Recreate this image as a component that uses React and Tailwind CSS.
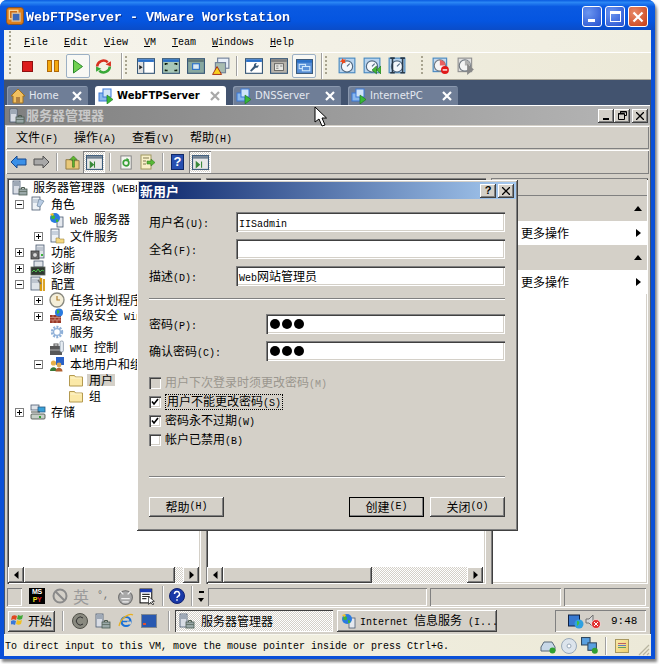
import React from "react";

const RAISED = "bg-[#d4d0c8] shadow-[inset_-1px_-1px_0_#404040,inset_1px_1px_0_#fff,inset_-2px_-2px_0_#808080]";
const SUNKEN = "bg-white shadow-[inset_1px_1px_0_#808080,inset_2px_2px_0_#404040,inset_-1px_-1px_0_#fff,inset_-2px_-2px_0_#d4d0c8]";
const ETCHED = "bg-[#d4d0c8] shadow-[inset_1px_1px_0_#808080,inset_-1px_-1px_0_#fff]";
const BAR = "bg-[#d4d0c8] shadow-[inset_1px_1px_0_#fff,inset_-1px_-1px_0_#808080]";
const DITHER = "bg-[repeating-conic-gradient(#fff_0_25%,#d4d0c8_0_50%)] bg-[length:2px_2px]";

// SimSun has half width latin, so ascii runs get a smaller mono font
function Zh({ children }) {
  return children.split(/([\x00-\x7f]+)/).map((p, i) =>
    /^[\x00-\x7f]+$/.test(p) ? (
      <span key={i} className="font-['Liberation_Mono',monospace] text-[10px] whitespace-pre">{p}</span>
    ) : (
      p
    )
  );
}

function Svg({ size = 16, children, className = "" }) {
  return (
    <svg width={size} height={size} viewBox="0 0 16 16" className={"shrink-0 " + className}>
      {children}
    </svg>
  );
}

/* ---------- icons ---------- */
const Server = ({ size }) => (
  <Svg size={size}>
    <rect x="1" y="1" width="7" height="13" fill="#d8dce4" stroke="#4a5a70" strokeWidth="0.8" />
    <path d="M2 3h5M2 5h5" stroke="#4a5a70" strokeWidth="0.8" />
    <rect x="7" y="9" width="8" height="6" fill="#9aa8a8" stroke="#4a5a50" strokeWidth="0.8" />
    <path d="M9.5 9V7.5h3V9" fill="none" stroke="#4a5a50" />
    <path d="M7 11.5h8" stroke="#5a6a60" strokeWidth="0.8" />
  </Svg>
);
const Doc = ({ children }) => (
  <Svg>
    <rect x="2" y="1" width="8" height="13" fill="#eef2f6" stroke="#4a5a70" strokeWidth="0.8" />
    <path d="M3 4h6M3 6h6" stroke="#8aa0b8" strokeWidth="0.8" />
    {children}
  </Svg>
);
const Folder = () => (
  <Svg>
    <path d="M1.5 3.5h5l1 1.5h7v9h-13z" fill="#fbe9a8" stroke="#b49a50" strokeWidth="1" />
    <path d="M2.5 6h11" stroke="#fff6d0" />
  </Svg>
);
const Globe = () => (
  <Svg>
    <rect x="8" y="5" width="6" height="10" fill="#e4e8ee" stroke="#4a5a70" strokeWidth="0.8" />
    <circle cx="6" cy="6" r="5" fill="#2a7ae0" />
    <path d="M3 3c2 0 4 1 3 3S3 7 2 6zM7 7c2 0 3 1 2 3l-2 0z" fill="#3cb43c" />
    <path d="M1 2l3-1 1 2-2 1z" fill="#f0c030" />
  </Svg>
);
const Gear = ({ c = "#8fb0d8" }) => (
  <Svg>
    <circle cx="8" cy="8" r="5" fill="none" stroke={c} strokeWidth="2.4" strokeDasharray="2 1.2" />
    <circle cx="8" cy="8" r="3.4" fill="none" stroke={c} strokeWidth="1.3" />
  </Svg>
);
const Clock = () => (
  <Svg>
    <circle cx="8" cy="8" r="7" fill="#f4eed8" stroke="#8a8a80" strokeWidth="1.4" />
    <path d="M8 4v4h3" fill="none" stroke="#b08030" strokeWidth="1.2" />
  </Svg>
);
const Wall = () => (
  <Svg>
    <rect x="1" y="7" width="11" height="8" fill="#9a3a28" />
    <path d="M1 9.5h11M1 12h11M4 7v2.5M8 7v2.5M6 9.5V12M10 9.5V12M4 12v3M8 12v3" stroke="#e0b0a0" strokeWidth="0.6" />
    <circle cx="10" cy="4.5" r="4" fill="#2a7ae0" />
    <path d="M8 2c2 0 3 1 2 3l-2 1z" fill="#3cb43c" />
  </Svg>
);
const Tools = () => (
  <Svg>
    <rect x="1" y="1" width="9" height="13" fill="#dfe3e8" stroke="#4a5a70" strokeWidth="0.8" />
    <path d="M2 4h7M2 6h7" stroke="#8a98a8" strokeWidth="0.8" />
    <path d="M11 2v13" stroke="#d89a10" strokeWidth="2.4" />
    <path d="M14 3v12" stroke="#d89a10" strokeWidth="1.8" />
    <path d="M8 4l3 4" stroke="#707070" strokeWidth="1.4" />
  </Svg>
);
const Features = () => (
  <Svg>
    <rect x="6" y="1" width="8" height="13" fill="#dfe3e8" stroke="#4a5a70" strokeWidth="0.8" />
    <path d="M7 4h6M7 6h6" stroke="#8a98a8" strokeWidth="0.8" />
    <rect x="1" y="7" width="8" height="8" fill="#707070" stroke="#303030" strokeWidth="0.8" />
    <circle cx="5" cy="11" r="2.4" fill="#d8d8d8" stroke="#303030" strokeWidth="0.6" />
    <rect x="11" y="10" width="2" height="2" fill="#3cb43c" />
  </Svg>
);
const Diag = () => (
  <Svg>
    <rect x="4" y="1" width="9" height="6" fill="#dfe3e8" stroke="#4a5a70" strokeWidth="0.8" />
    <rect x="1" y="7" width="14" height="8" fill="#303830" stroke="#606860" strokeWidth="0.8" />
    <path d="M2 12l2-2 2 2 2-3 2 3 2-2 2 1" fill="none" stroke="#50d050" strokeWidth="0.9" />
  </Svg>
);
const Wmi = () => (
  <Svg>
    <rect x="1" y="6" width="12" height="9" fill="#585858" />
    <path d="M1 10h12" stroke="#b0b0b0" />
    <rect x="5" y="4" width="4" height="2" fill="none" stroke="#585858" />
    <rect x="11" y="1" width="3.4" height="11" rx="1.4" fill="#e8eef4" stroke="#7a8a9a" strokeWidth="0.7" />
  </Svg>
);
const Users = () => (
  <Svg>
    <rect x="7" y="1" width="8" height="8" fill="#2a62c8" />
    <circle cx="4.5" cy="7" r="2.6" fill="#e8b048" />
    <path d="M1 15c0-5 7-5 7 0z" fill="#3a7a38" />
    <circle cx="10" cy="9" r="2.4" fill="#d8a858" />
    <path d="M6.5 15.5c0-5 7-5 7 0z" fill="#b06030" />
  </Svg>
);
const Storage = () => (
  <Svg>
    <rect x="1" y="1" width="8" height="5" fill="#dfe3e8" stroke="#4a5a70" strokeWidth="0.8" />
    <rect x="8" y="3" width="7" height="5" fill="#3aa0d8" stroke="#2a5a80" strokeWidth="0.8" />
    <rect x="1" y="10" width="14" height="5" rx="1" fill="#c8d0c8" stroke="#404840" strokeWidth="0.8" />
    <path d="M1 8h9" stroke="#404840" />
    <rect x="9" y="12" width="2" height="2" fill="#30a030" />
  </Svg>
);
const VmTab = ({ size = 16, c = "#3a78d8" }) => (
  <Svg size={size}>
    <rect x="1" y="5" width="8" height="8" fill="#8ab8ec" stroke={c} />
    <rect x="5" y="1" width="8" height="8" fill="#d0e4f8" stroke={c} />
    <path d="M9 7l6 4.5L9 16z" fill="#38b838" stroke="#1a7a1a" strokeWidth="0.6" />
  </Svg>
);
const WinBox = ({ children, size = 18, fill = "#fff", head = "#2a70c8" }) => (
  <Svg size={size}>
    <rect x="0.5" y="1.5" width="15" height="13" fill={fill} stroke="#385878" />
    <rect x="1" y="2" width="14" height="2.4" fill={head} />
    {children}
  </Svg>
);
const Dial = ({ children }) => (
  <Svg size={18}>
    <rect x="1" y="1" width="14" height="13" fill="#b8d4ee" stroke="#4888c0" />
    <circle cx="8" cy="8.4" r="5" fill="#f4f8fc" stroke="#506880" strokeWidth="1" />
    <path d="M8 8.4l2.4-2.6" stroke="#506880" />
    {children}
  </Svg>
);
const Pie = ({ children, gray }) => (
  <Svg size={18}>
    <rect x="1" y="1" width="12" height="12" fill={gray ? "#e0e0e0" : "#c4d8ee"} stroke={gray ? "#909090" : "#4888c0"} />
    <circle cx="7" cy="7.6" r="5" fill="#f4f4f4" stroke="#707880" />
    <path d="M7 7.6V2.6A5 5 0 0 1 12 7.6z" fill={gray ? "#b0b0b0" : "#e86060"} />
    {children}
  </Svg>
);
const Grip = () => (
  <div className="w-[2px] h-[20px] shrink-0 bg-[repeating-linear-gradient(to_bottom,#a8a490_0_2px,transparent_2px_4px)]" />
);
const VSep = ({ className = "" }) => <div className={"w-[2px] shrink-0 bg-[linear-gradient(to_right,#a0a0a0_50%,#fff_50%)] " + className} />;
const Ico = ({ children, className = "" }) => <div className={"w-[18px] flex justify-center shrink-0 " + className}>{children}</div>;

/* ---------- vmware chrome ---------- */
function TitleBar() {
  return (
    <div className="h-[30px] shrink-0 flex items-center pl-[6px] pr-[7px] rounded-t-[7px] bg-[linear-gradient(to_bottom,#0a5be0_0,#2a86f4_8%,#0a5ae2_22%,#0555e0_70%,#0a4cc8_100%)]">
      <Svg size={18} className="mt-[2px]">
        <rect x="0.5" y="0.5" width="15" height="15" rx="2.5" fill="#e0801c" stroke="#8a4a10" strokeWidth="0.7" />
        <rect x="3" y="3" width="7.500" height="7.500" fill="#c86810" stroke="#f8d8a0" strokeWidth="1.200" />
        <rect x="5.500" y="5.500" width="7" height="7" fill="#3a68b8" stroke="#d8c0a0" strokeWidth="1.200" />
      </Svg>
      <span className="ml-[2px] pt-[5px] font-['Liberation_Mono',monospace] font-bold text-[13.33px] text-white whitespace-pre drop-shadow-[1px_1px_0_#0a3090]">
        WebFTPServer - VMware Workstation
      </span>
      <div className="ml-auto flex gap-[3px] mt-[3px]">
        <div className="w-[20px] h-[21px] rounded-[3px] border border-white bg-[radial-gradient(circle_at_30%_30%,#6c96f0,#2450d0)] flex items-end pl-[5px] pb-[4px]">
          <div className="w-[7px] h-[3px] bg-white" />
        </div>
        <div className="w-[20px] h-[21px] rounded-[3px] border border-white bg-[radial-gradient(circle_at_30%_30%,#6c96f0,#2450d0)] flex items-center justify-center">
          <div className="w-[11px] h-[11px] border border-white border-t-[3px]" />
        </div>
        <div className="w-[20px] h-[21px] rounded-[3px] border border-white bg-[radial-gradient(circle_at_30%_30%,#e88a68,#c83c14)] flex items-center justify-center">
          <svg width="12" height="12" viewBox="0 0 12 12"><path d="M1.5 1.5l9 9M10.5 1.5l-9 9" stroke="#fff" strokeWidth="2.2" /></svg>
        </div>
      </div>
    </div>
  );
}

function MenuBar() {
  const items = [["F", "ile", "w-[40px]"], ["E", "dit", "w-[40px]"], ["V", "iew", "w-[40px]"], ["V", "M", "w-[28px]"], ["T", "eam", "w-[40px]"], ["W", "indows", "w-[58px]"], ["H", "elp", "w-[40px]"]];
  return (
    <div className="h-[22px] shrink-0 flex items-center pl-[5px] bg-[linear-gradient(to_right,#f6f4ec,#f0eee0)] font-['Liberation_Mono',monospace] text-[10px] text-black">
      <Grip />
      <div className="flex ml-[13px] pt-[3px]">
        {items.map(([a, b, w]) => (
          <span key={a + b} className={w}>
            <span className="underline">{a}</span>
            {b}
          </span>
        ))}
      </div>
    </div>
  );
}

function Toolbar() {
  const box = "w-[24px] h-[24px] rounded-[2px] border border-[#9cb0c4] bg-[#f8f8f4] flex items-center justify-center shrink-0";
  return (
    <div className="h-[28px] shrink-0 flex items-center pl-[5px] border-t border-t-white border-b border-b-[#aca899] bg-[linear-gradient(to_right,#f4f2e8,#ece9d8)]">
      <Grip />
      <div className="w-[11px] h-[11px] ml-[11px] bg-[#dc1c1c] border border-[#901010]" />
      <div className="flex gap-[2px] ml-[14px]">
        <div className="w-[5px] h-[12px] bg-[#f4a80c] border border-[#b06808]" />
        <div className="w-[5px] h-[12px] bg-[#f4a80c] border border-[#b06808]" />
      </div>
      <div className={box + " ml-[7px]"}>
        <svg width="12" height="15" viewBox="0 0 12 15"><path d="M1.5 1l9 6.5-9 6.5z" fill="#70d050" stroke="#2a8a2a" /></svg>
      </div>
      <Ico className="ml-[4px]">
        <Svg size={17}>
          <path d="M2 8a6 6 0 0 1 10-4" fill="none" stroke="#d83020" strokeWidth="2.4" />
          <path d="M14 8a6 6 0 0 1-10 4" fill="none" stroke="#38a838" strokeWidth="2.4" />
          <path d="M10 6l5-3v5z" fill="#d83020" />
          <path d="M6 10l-5 3V8z" fill="#38a838" />
        </Svg>
      </Ico>
      <VSep className="h-[26px] ml-[9px]" />
      <div className="ml-[2px]"><Grip /></div>
      <div className="flex gap-[7px] ml-[10px]">
        <Ico><WinBox><rect x="1" y="4.5" width="5" height="9.5" fill="#e0e0e0" /><path d="M6 4.5v10" stroke="#385878" /><path d="M2 7l3 2-3 2z" fill="#202020" /></WinBox></Ico>
        <Ico><WinBox fill="#a8c8b8"><path d="M3 7V6h2M13 7V6h-2M3 11v1h2M13 11v1h-2" fill="none" stroke="#102010" strokeWidth="1.2" /></WinBox></Ico>
        <Ico><WinBox fill="#88a8a0" head="#607878"><rect x="5" y="6" width="6" height="5" fill="#d8e8f4" stroke="#2a70c8" /></WinBox></Ico>
        <Ico>
          <Svg size={18}>
            <rect x="5" y="1" width="10" height="9" fill="#e8eff8" stroke="#708098" />
            <rect x="3" y="5" width="9" height="9" fill="#a8bcb0" stroke="#708098" />
            <path d="M4.5 8.5l4 7h-8z" fill="#f8d020" stroke="#a02010" strokeWidth="0.8" />
          </Svg>
        </Ico>
      </div>
      <VSep className="h-[20px] ml-[6px]" />
      <div className="flex gap-[7px] ml-[7px] items-center">
        <Ico><WinBox><path d="M10.500 5.500a2 2 0 0 0-2.500 2.500L4.500 12l1 1 4-3.500a2 2 0 0 0 2.500-2.500l-1.500 1-1-1z" fill="#385878" /></WinBox></Ico>
        <Ico><WinBox fill="#b8b4ac" head="#808080"><rect x="4" y="6" width="8" height="6" fill="#e8e8e4" stroke="#505050" strokeWidth="0.7" /><path d="M5.500 8h2M5.500 10h2M9 8h2" stroke="#606060" strokeWidth="0.7" /></WinBox></Ico>
        <div className={box + " -ml-[3px]"}>
          <WinBox size={17} fill="#5890d8"><rect x="3" y="6" width="6" height="4" fill="none" stroke="#d0e8fc" /><rect x="6" y="8" width="7" height="4" fill="#5890d8" stroke="#d0e8fc" /></WinBox>
        </div>
      </div>
      <VSep className="h-[26px] ml-[5px]" />
      <div className="ml-[2px]"><Grip /></div>
      <div className="flex gap-[7px] ml-[11px]">
        <Ico><Dial><path d="M4 1l1 1.500 2-.5-1 2 1 1.500-2-.5-1 1.500-.5-2-2-.5 1.500-1z" fill="#f04818" /></Dial></Ico>
        <Ico><Dial><path d="M16 8v7l-4-3.500zM12 8v7l-4-3.500z" fill="#48b838" stroke="#186818" strokeWidth="0.5" /></Dial></Ico>
        <Ico><Dial><path d="M2 1h4M4 1v13M2 14h4M11 1h4M13 1v13M11 14h4" fill="none" stroke="#283848" strokeWidth="1.4" /></Dial></Ico>
      </div>
      <div className="ml-[15px] flex items-center">
        <Grip />
      </div>
      <div className="flex gap-[7px] ml-[9px]">
        <Ico><Pie><circle cx="11.500" cy="11.500" r="3.500" fill="#e01818" /><path d="M9.500 11.500h4" stroke="#fff" strokeWidth="1.200" /></Pie></Ico>
        <Ico><Pie gray><path d="M9 6l6 5-6 5z" fill="#888" /></Pie></Ico>
      </div>
    </div>
  );
}

function Tab({ icon, label, w, active }) {
  return (
    <div className={"h-[19px] flex items-center rounded-t-[3px] pl-[3px] pr-[6px] " + w + " " + (active ? "bg-white" : "bg-[#6f7e97] shadow-[inset_1px_1px_0_#8a98ae]")}>
      {icon}
      <span className={"ml-[3px] font-['DejaVu_Sans',sans-serif] whitespace-nowrap " + (active ? "font-bold text-[10px] text-black" : "text-[10px] text-[#e4e8f0]")}>{label}</span>
      <svg width="10" height="10" viewBox="0 0 10 10" className="ml-auto"><path d="M1 1l8 8M9 1L1 9" stroke={active ? "#a8a8a8" : "#fff"} strokeWidth="2.200" /></svg>
    </div>
  );
}

function Tabs() {
  return (
    <div className="h-[25px] shrink-0 flex items-end gap-[7px] pl-[3px] bg-[#42536f]">
      <Tab w="w-[81px]" label="Home" icon={<Svg size={16}><path d="M8 1L1 8h2v7h10V8h2z" fill="#f0c060" stroke="#a07020" /><rect x="6" y="9" width="4" height="6" fill="#b08040" /></Svg>} />
      <Tab w="w-[131px]" active label="WebFTPServer" icon={<VmTab />} />
      <Tab w="w-[108px]" label="DNSServer" icon={<VmTab />} />
      <Tab w="w-[110px]" label="InternetPC" icon={<VmTab />} />
    </div>
  );
}

function VmStatus() {
  return (
    <div className="h-[22px] shrink-0 flex items-center pl-[1px] pr-[1px] bg-[linear-gradient(to_right,#f4f2e4,#ece9d8)] border-t border-t-[#f8f8f0]">
      <span className="pt-[2px] font-['Liberation_Mono',monospace] text-[10px] text-black whitespace-pre">To direct input to this VM, move the mouse pointer inside or press Ctrl+G.</span>
      <div className="ml-auto flex items-center">
        <Svg>
          <path d="M1 9l3-5h8l3 5v4H1z" fill="#c8d8e8" stroke="#586878" />
          <circle cx="12.500" cy="12.500" r="3" fill="#30a030" />
        </Svg>
        <Svg size={16} className="ml-[5px]">
          <circle cx="8" cy="8" r="7.500" fill="#dce4ec" stroke="#98a8b8" />
          <circle cx="8" cy="8" r="2" fill="#fff" stroke="#98a8b8" />
        </Svg>
        <Svg size={17} className="ml-[4px]">
          <rect x="0.500" y="0.500" width="8" height="7" fill="#5aa0e0" stroke="#304860" />
          <rect x="6.500" y="5.500" width="8" height="7" fill="#5aa0e0" stroke="#304860" />
          <circle cx="13" cy="13" r="2.800" fill="#30a030" />
        </Svg>
        <VSep className="h-[18px] ml-[7px]" />
        <div className="w-[14px] h-[14px] ml-[8px] border border-[#a89860] bg-[linear-gradient(135deg,#f8e8a8,#f0d070)] flex flex-col justify-center gap-[1px] px-[2px]">
          <div className="h-[1px] bg-[#c06060]" /><div className="h-[1px] bg-[#6080c0]" /><div className="h-[1px] bg-[#60a060]" />
        </div>
        <svg width="12" height="12" viewBox="0 0 12 12" className="ml-[9px] mt-[8px]"><path d="M11 1L1 11M11 5l-6 6M11 9l-2 2" stroke="#b8b4a0" strokeWidth="1.200" /></svg>
      </div>
    </div>
  );
}

/* ---------- guest: server manager ---------- */
const TREE = [
  { lv: 0, icon: <Server />, label: "服务器管理器 (WEBFTPSERVER)" },
  { lv: 1, exp: "-", icon: <Doc><path d="M9 3l5 2-4 6-3-1z" fill="#b8cce4" stroke="#607890" strokeWidth="0.6" /></Doc>, label: "角色" },
  { lv: 2, icon: <Globe />, label: "Web 服务器 (IIS)" },
  { lv: 2, exp: "+", icon: <Doc><path d="M7 10h3l1 1h4v4H7z" fill="#f4d880" stroke="#a08840" strokeWidth="0.6" /></Doc>, label: "文件服务" },
  { lv: 1, exp: "+", icon: <Features />, label: "功能" },
  { lv: 1, exp: "+", icon: <Diag />, label: "诊断" },
  { lv: 1, exp: "-", icon: <Tools />, label: "配置" },
  { lv: 2, exp: "+", icon: <Clock />, label: "任务计划程序" },
  { lv: 2, exp: "+", icon: <Wall />, label: "高级安全 Windows 防火墙" },
  { lv: 2, icon: <Gear />, label: "服务" },
  { lv: 2, icon: <Wmi />, label: "WMI 控制" },
  { lv: 2, exp: "-", icon: <Users />, label: "本地用户和组" },
  { lv: 3, icon: <Folder />, label: "用户", selected: true },
  { lv: 3, icon: <Folder />, label: "组" },
  { lv: 1, exp: "+", icon: <Storage />, label: "存储" },
];
const INDENT = { 0: "pl-[4px]", 1: "pl-[7px]", 2: "pl-[26px]", 3: "pl-[60px]" };

function Expander({ sign }) {
  return (
    <div className="w-[15px] shrink-0">
      {sign && (
        <div className="w-[9px] h-[9px] border border-[#808080] bg-white relative">
          <div className="absolute left-[1px] right-[1px] top-[3px] h-[1px] bg-black" />
          {sign === "+" && <div className="absolute top-[1px] bottom-[1px] left-[3px] w-[1px] bg-black" />}
        </div>
      )}
    </div>
  );
}

function Tree() {
  return (
    <div className="flex-1 pt-[1px] overflow-hidden">
      {TREE.map((r, i) => (
        <div key={i} className={"h-[16px] flex items-center whitespace-nowrap " + INDENT[r.lv]}>
          {r.lv > 0 && r.lv < 3 && <Expander sign={r.exp} />}
          {r.icon}
          <span className={r.selected ? "ml-[3px] px-[2px] bg-[#d4d0c8]" : "ml-[5px]"}>
            <Zh>{r.label}</Zh>
          </span>
        </div>
      ))}
    </div>
  );
}

const Arrow = ({ dir }) => (
  <svg width="5" height="8" viewBox="0 0 5 8"><path d={dir === "l" ? "M4.500 0v8L0 4z" : "M.5 0v8L5 4z"} fill="#000" /></svg>
);

function HScroll({ thumb, track }) {
  return (
    <div className="h-[16px] shrink-0 flex">
      <div className={"w-[16px] flex items-center justify-center " + RAISED}><Arrow dir="l" /></div>
      <div className={"h-full " + thumb + " " + RAISED} />
      <div className={"h-full " + track + " " + DITHER} />
      <div className={"w-[16px] flex items-center justify-center " + RAISED}><Arrow dir="r" /></div>
    </div>
  );
}

function ActionHead() {
  return (
    <div className="h-[25px] flex items-center justify-end pr-[5px] bg-[#d4d0c8]">
      <svg width="8" height="5" viewBox="0 0 8 5"><path d="M0 5h8L4 0z" fill="#000" /></svg>
    </div>
  );
}
function ActionItem() {
  return (
    <div className="h-[24px] flex items-center pl-[29px] pr-[6px] bg-white whitespace-nowrap">
      更多操作
      <svg width="5" height="8" viewBox="0 0 5 8" className="ml-auto"><path d="M0 0v8l5-4z" fill="#000" /></svg>
    </div>
  );
}

function MmcToolbar() {
  const pressed = "w-[22px] h-[22px] flex items-center justify-center " + DITHER + " shadow-[inset_1px_1px_0_#808080,inset_-1px_-1px_0_#fff]";
  return (
    <div className={"h-[24px] mt-[1px] flex items-center pl-[4px] " + BAR}>
      <svg width="17" height="14" viewBox="0 0 17 14"><path d="M1 7l6-6v3h9v6H7v3z" fill="#3a90e8" stroke="#18488c" /></svg>
      <svg width="17" height="14" viewBox="0 0 17 14" className="ml-[6px]"><path d="M16 7l-6-6v3H1v6h9v3z" fill="#a8a8a8" stroke="#505050" /></svg>
      <VSep className="h-[18px] ml-[6px]" />
      <div className="ml-[7px]">
        <Svg size={15}>
          <path d="M1 5h5l1 1h8v9H1z" fill="#e8c878" stroke="#907840" />
          <path d="M8 13V5H5l4-4 4 4h-3v8z" fill="#60b830" stroke="#306818" strokeWidth="0.6" />
        </Svg>
      </div>
      <div className={"ml-[3px] " + pressed}>
        <WinBox size={17} fill="#e8e8e8" head="#708090"><path d="M8 7v6M7 10l-3-2.500v5z" stroke="#388838" fill="#388838" /></WinBox>
      </div>
      <VSep className="h-[18px] ml-[4px]" />
      <div className="ml-[8px]">
        <Svg size={15}>
          <rect x="2" y="1" width="11" height="14" fill="#f4f4f0" stroke="#808080" />
          <circle cx="7.500" cy="8.500" r="3" fill="none" stroke="#38a038" strokeWidth="1.800" />
          <path d="M8 3l3 2-3 2z" fill="#38a038" />
        </Svg>
      </div>
      <div className="ml-[6px]">
        <Svg>
          <rect x="1" y="1" width="10" height="14" fill="#f8f0c8" stroke="#a09860" />
          <path d="M3 4h6M3 7h3M3 10h3" stroke="#807850" />
          <path d="M7 7h4V5l4 3.500-4 3.500v-2H7z" fill="#58b838" stroke="#2a7018" strokeWidth="0.5" />
        </Svg>
      </div>
      <VSep className="h-[18px] ml-[6px]" />
      <div className="ml-[7px] w-[13px] h-[16px] bg-[#2850b0] border border-[#102868] text-white font-['Liberation_Sans',sans-serif] font-bold text-[13px] leading-[14px] text-center">?</div>
      <div className={"ml-[5px] " + pressed}>
        <WinBox size={17} fill="#e8e8e8" head="#708090"><path d="M4 7.500l3 2.500-3 2.500zM9 7v6" stroke="#388838" fill="#388838" /></WinBox>
      </div>
    </div>
  );
}

function StatusRow() {
  return (
    <div className="h-[23px] shrink-0 flex items-stretch bg-[#d4d0c8] pb-[1px]">
      <div className={"w-[15px] ml-[1px] mt-[4px] " + ETCHED} />
      <div className="flex items-center pl-[7px] pt-[2px]">
        <div className="w-[16px] h-[16px] bg-black text-[7px] leading-[8px] font-bold text-center font-['Liberation_Sans',sans-serif] tracking-tighter">
          <div className="text-white">MS</div>
          <div className="text-[#f0e020]">P<span className="text-[#e02020]">Y</span></div>
        </div>
        <svg width="16" height="16" viewBox="0 0 16 16" className="ml-[7px]"><circle cx="8" cy="8" r="6.500" fill="none" stroke="#8a8a8a" strokeWidth="2" /><path d="M3.500 3.500l9 9" stroke="#8a8a8a" strokeWidth="2" /></svg>
        <span className="ml-[5px] w-[16px] text-[16px] leading-none text-[#9a9a9a]">英</span>
        <span className="ml-[8px] w-[12px] text-[10px] text-[#707070] font-['Liberation_Mono',monospace] whitespace-pre">°,</span>
        <Svg size={17} className="ml-[8px]">
          <circle cx="8" cy="9" r="6.500" fill="#a8a8a8" stroke="#707070" />
          <path d="M3 3l3 3M13 3l-3 3M4 10h8M5 13h6" stroke="#f0f0f0" strokeWidth="1.200" />
        </Svg>
        <Svg size={17} className="ml-[5px]">
          <rect x="1" y="1" width="11" height="13" fill="#fff" stroke="#101010" />
          <rect x="1" y="1" width="11" height="3" fill="#1838b0" />
          <path d="M3 6h7M3 8h7M3 10h4" stroke="#303030" />
          <path d="M9 8v7.500l2-2 2 2.500 1-1-2-2 2.500-.5z" fill="#fff" stroke="#000" strokeWidth="0.6" />
        </Svg>
        <VSep className="h-[20px] ml-[6px]" />
        <svg width="16" height="16" viewBox="0 0 16 16" className="ml-[5px]"><circle cx="8" cy="8" r="7.500" fill="#1838a8" stroke="#102070" /><path d="M5.500 6a2.500 2.500 0 1 1 3.500 2.300c-.7.4-1 .8-1 1.700M8 11.200v1.600" fill="none" stroke="#fff" strokeWidth="1.500" /></svg>
        <VSep className="h-[20px] ml-[6px]" />
        <div className="ml-[5px] w-[6px] flex flex-col items-center gap-[5px]">
          <div className="w-[5px] h-[2px] bg-black" />
          <svg width="6" height="4" viewBox="0 0 6 4"><path d="M0 0h6L3 4z" fill="#000" /></svg>
        </div>
      </div>
      <div className={"flex-1 ml-[4px] mt-[4px] " + ETCHED} />
      <div className={"w-[131px] ml-[3px] mt-[4px] " + ETCHED} />
      <div className={"w-[82px] ml-[3px] mr-[3px] mt-[4px] " + ETCHED} />
    </div>
  );
}

function Taskbar() {
  return (
    <div className="h-[27px] shrink-0 flex items-center pl-[2px] bg-[#d4d0c8] border-t border-t-white">
      <div className={"w-[47px] h-[21px] flex items-center pl-[3px] " + RAISED}>
        <svg width="15" height="14" viewBox="0 0 15 14">
          <path d="M1 2c2-1 3-1 5 0L5 6C3 5 2 5 0 6z" fill="#e04820" />
          <path d="M7 1c2 1 3 1 5 0l-1 4c-2 1-3 1-5 0z" fill="#40a838" />
          <path d="M0 7c2-1 3-1 5 0l-1 4c-2-1-3-1-5 0z" fill="#3878d8" />
          <path d="M6 6c2 1 3 1 5 0l-1 4c-2 1-3 1-5 0z" fill="#f0c020" />
        </svg>
        <span className="ml-[2px] text-[12px]">开始</span>
      </div>
      <VSep className="h-[20px] ml-[7px]" />
      <div className="flex gap-[7px] ml-[8px] items-center">
        <svg width="16" height="16" viewBox="0 0 16 16"><circle cx="8" cy="8" r="7.500" fill="#8a8a80" stroke="#505048" /><path d="M11 5a4 4 0 1 0 0 6" fill="none" stroke="#303030" /></svg>
        <Server />
        <svg width="16" height="16" viewBox="0 0 16 16"><circle cx="8" cy="8.500" r="4.500" fill="none" stroke="#1870d8" strokeWidth="2.200" /><path d="M3.500 8.500h9" stroke="#1870d8" strokeWidth="1.500" /><path d="M9 8.500h4v3H9z" fill="#d4d0c8" /><path d="M1 13C3 4 12 0 15 2" fill="none" stroke="#e8b020" strokeWidth="1.200" /></svg>
        <svg width="16" height="14" viewBox="0 0 16 14"><rect x="0.500" y="0.500" width="15" height="13" fill="#2858b0" stroke="#808890" /><rect x="2" y="9" width="3" height="2" fill="#e05030" /></svg>
      </div>
      <VSep className="h-[20px] ml-[11px]" />
      <div className={"w-[158px] h-[22px] ml-[5px] flex items-center pl-[4px] shadow-[inset_1px_1px_0_#404040,inset_-1px_-1px_0_#fff] " + DITHER}>
        <Server />
        <span className="ml-[6px]">服务器管理器</span>
      </div>
      <div className={"w-[160px] h-[22px] ml-[4px] flex items-center pl-[4px] whitespace-nowrap overflow-hidden " + RAISED}>
        <Globe />
        <span className="ml-[3px]"><Zh>Internet 信息服务 (I...</Zh></span>
      </div>
      <div className="w-[91px] h-[22px] ml-auto mr-[3px] flex items-center pl-[13px] bg-[#d4d0c8] shadow-[inset_1px_1px_0_#808080,inset_-1px_-1px_0_#fff]">
        <Svg>
          <rect x="0.500" y="2" width="11" height="11" fill="#3878d0" stroke="#102040" />
          <circle cx="11" cy="11" r="4.500" fill="#30a0e0" />
          <path d="M9 8c2 0 3 1 2 3l-2 2z" fill="#40c040" />
        </Svg>
        <Svg className="ml-[1px]">
          <path d="M1 6h3l4-4v12l-4-4H1z" fill="#d8d8d8" stroke="#707070" />
          <circle cx="11" cy="11" r="4.500" fill="#e03030" stroke="#fff" strokeWidth="0.6" />
          <path d="M9 9l4 4M13 9l-4 4" stroke="#fff" />
        </Svg>
        <span className="ml-[10px] font-['Liberation_Mono',monospace] text-[11px]">9:48</span>
      </div>
    </div>
  );
}

function MmcWindow() {
  return (
    <div className="flex-1 min-h-0 flex flex-col bg-[#d4d0c8] border-t border-t-white">
      <div className="h-[19px] shrink-0 flex items-center pl-[4px] pr-[2px] bg-[linear-gradient(to_right,#7f7f7f,#b6b6b6)]">
        <Server />
        <span className="ml-[1px] pb-[3px] text-[13px] font-bold text-[#c8c8c8]">服务器管理器</span>
        <div className="ml-auto flex">
          <div className={"w-[16px] h-[14px] flex items-end pl-[5px] pb-[3px] " + RAISED}><div className="w-[6px] h-[2px] bg-black" /></div>
          <div className={"w-[16px] h-[14px] flex items-center justify-center " + RAISED}>
            <svg width="9" height="9" viewBox="0 0 9 9"><path d="M2.500 2.500V.5h6v4h-2M.5 2.500h6v6h-6z" fill="none" stroke="#000" /><path d="M2 1h6M0 3h6" stroke="#000" /></svg>
          </div>
          <div className={"w-[16px] h-[14px] ml-[2px] flex items-center justify-center " + RAISED}>
            <svg width="8" height="8" viewBox="0 0 8 8"><path d="M0 0l8 8M8 0L0 8" stroke="#000" strokeWidth="1.300" /></svg>
          </div>
        </div>
      </div>
      <div className="px-[1px] mt-[1px] flex-1 min-h-0 flex flex-col">
        <div className={"h-[23px] flex items-center pl-[10px] " + BAR}>
          <span className="w-[58px]"><Zh>文件(F)</Zh></span>
          <span className="w-[58px]"><Zh>操作(A)</Zh></span>
          <span className="w-[58px]"><Zh>查看(V)</Zh></span>
          <span><Zh>帮助(H)</Zh></span>
        </div>
        <MmcToolbar />
        <div className="flex-1 min-h-0 flex pt-[4px] pr-[1px]">
          <div className={"w-[194px] ml-[1px] flex flex-col " + SUNKEN + " p-[1px]"}>
            <Tree />
            <HScroll thumb="w-[151px]" track="w-[8px]" />
          </div>
          <div className={"w-[280px] ml-[5px] flex flex-col justify-end " + SUNKEN + " p-[1px]"}>
            <HScroll thumb="w-[149px]" track="w-[95px]" />
          </div>
          <div className={"flex-1 ml-[5px] flex flex-col " + SUNKEN + " p-[1px]"}>
            <div className="h-[17px] bg-[#d4d0c8] border-b border-b-[#808080] shrink-0" />
            <ActionHead />
            <ActionItem />
            <ActionHead />
            <ActionItem />
          </div>
        </div>
        <StatusRow />
        <Taskbar />
      </div>
    </div>
  );
}

/* ---------- dialog ---------- */
function Field({ label, value, wide, pw }) {
  return (
    <div className="h-[20px] flex items-center">
      <span className={"pt-[1px] " + (wide ? "w-[117px] shrink-0" : "w-[87px] shrink-0")}><Zh>{label}</Zh></span>
      <div className={"flex-1 h-full flex items-center pl-[3px] " + SUNKEN}>
        {pw && (
          <div className="flex gap-[2px] pl-[1px]">
            <div className="w-[10px] h-[10px] rounded-full bg-black" />
            <div className="w-[10px] h-[10px] rounded-full bg-black" />
            <div className="w-[10px] h-[10px] rounded-full bg-black" />
          </div>
        )}
        {value && <span className="pt-[1px]"><Zh>{value}</Zh></span>}
      </div>
    </div>
  );
}

function Check({ label, on, disabled, focus }) {
  return (
    <div className={"h-[19px] flex items-center " + (disabled ? "text-[#9a968e]" : "")}>
      <div className={"w-[12px] h-[12px] shrink-0 flex items-center justify-center " + SUNKEN + (disabled ? " bg-[#d4d0c8]!" : "")}>
        {on && <svg width="8" height="8" viewBox="0 0 8 8"><path d="M1 3.500l2 2.500 4-5" fill="none" stroke="#000" strokeWidth="1.600" /></svg>}
      </div>
      <span className={"ml-[4px] " + (focus ? "border border-dotted border-black -ml-[1px] pl-[1px] pr-[1px]" : "")}>
        <Zh>{label}</Zh>
      </span>
    </div>
  );
}

function Btn({ w = "w-[75px]", label, def }) {
  return (
    <div className={"h-[20px] flex items-center justify-center " + w + " " + RAISED + (def ? " outline outline-1 outline-black -outline-offset-1" : "")}>
      <Zh>{label}</Zh>
    </div>
  );
}

function Separator() {
  return <div className="h-[2px] bg-[linear-gradient(to_bottom,#808080_50%,#fff_50%)]" />;
}

function Dialog() {
  return (
    <div className={"absolute left-[137px] top-[180px] w-[381px] h-[351px] p-[2px] " + RAISED}>
      <div className="h-[17px] mt-[0px] flex items-center pl-[1px] pr-[2px] bg-[linear-gradient(to_right,#0a246a,#a6caf0)]">
        <span className="text-[13px] font-bold text-white">新用户</span>
        <div className="ml-auto flex">
          <div className={"w-[16px] h-[14px] flex items-center justify-center font-['Liberation_Sans',sans-serif] font-bold text-[11px] text-black " + RAISED}>?</div>
          <div className={"w-[16px] h-[14px] ml-[2px] flex items-center justify-center " + RAISED}>
            <svg width="8" height="8" viewBox="0 0 8 8"><path d="M0 0l8 8M8 0L0 8" stroke="#000" strokeWidth="1.300" /></svg>
          </div>
        </div>
      </div>
      <div className="pl-[10px] pr-[11px] pt-[13px] flex flex-col">
        <div className="flex flex-col gap-[7px]">
          <Field label="用户名(U):" value="IISadmin" />
          <Field label="全名(F):" />
          <Field label="描述(D):" value="Web网站管理员" />
        </div>
        <div className="mt-[12px]"><Separator /></div>
        <div className="mt-[14px] flex flex-col gap-[7px]">
          <Field wide label="密码(P):" pw />
          <Field wide label="确认密码(C):" pw />
        </div>
        <div className="mt-[12px]">
          <Check disabled label="用户下次登录时须更改密码(M)" />
          <Check on focus label="用户不能更改密码(S)" />
          <Check on label="密码永不过期(W)" />
          <Check label="帐户已禁用(B)" />
        </div>
        <div className="mt-[27px]"><Separator /></div>
        <div className="mt-[19px] flex">
          <Btn label="帮助(H)" />
          <div className="ml-auto"><Btn def label="创建(E)" /></div>
          <div className="ml-[6px]"><Btn label="关闭(O)" /></div>
        </div>
      </div>
    </div>
  );
}

export default function App() {
  return (
    <div className="relative w-[659px] h-[664px] bg-white overflow-hidden font-['Noto_Sans_CJK_SC',sans-serif] text-[12px] leading-none text-black">
      <div className="w-[655px] h-[659px] flex flex-col rounded-t-[7px] bg-[#0a50d8] pb-[3px] shadow-[2px_3px_3px_#808080]">
        <TitleBar />
        <div className="mx-[4px] flex-1 min-h-0 flex flex-col">
          <MenuBar />
          <Toolbar />
          <Tabs />
          <div className="flex-1 min-h-0 flex flex-col px-[1px] bg-[#42536f]">
            <MmcWindow />
          </div>
          <VmStatus />
        </div>
      </div>
      <Dialog />
      {/* mouse pointer */}
      <svg width="13" height="21" viewBox="0 0 13 21" className="absolute left-[314px] top-[106px]">
        <path d="M1 1v15l4-3 3 7 3-1-3-7h4.500z" fill="#fff" stroke="#000" />
      </svg>
    </div>
  );
}
